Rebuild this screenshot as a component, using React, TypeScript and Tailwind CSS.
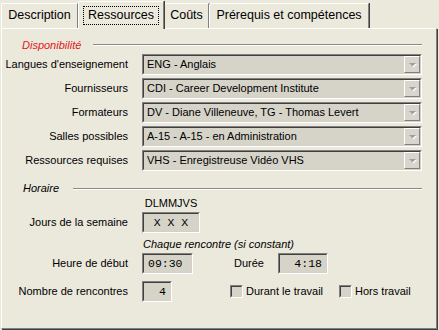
import React from "react";

const Sunken = ({ className, inner, children }: { className: string; inner: string; children?: React.ReactNode }) => (
  <div className={"border border-t-[#808080] border-l-[#808080] border-b-white border-r-white " + className}>
    <div className={"h-full w-full border border-t-[#404040] border-l-[#404040] border-b-[#d4d0c8] border-r-[#d4d0c8] bg-[#d6d3c9] flex items-center " + inner}>
      {children}
    </div>
  </div>
);

const Combo = ({ text }: { text: string }) => (
  <Sunken className="h-[21px] w-[280px]" inner="justify-between">
    <span className="pl-[3px] whitespace-nowrap">{text}</span>
    <div className="h-[17px] w-[16px] border border-t-white border-l-white border-b-[#808080] border-r-[#808080] bg-[#d8d5cc] flex items-center justify-center">
      <svg width="9" height="6" viewBox="0 0 9 6">
        <polygon points="2,2 9,2 5.5,5.5" fill="#ffffff" />
        <polygon points="1,1 8,1 4.5,4.5" fill="#a0a0a0" />
      </svg>
    </div>
  </Sunken>
);

const Header = ({ text, red }: { text: string; red?: boolean }) => (
  <div className="flex items-center h-[13px] leading-[13px] pr-[14px]">
    <span className={"italic whitespace-nowrap " + (red ? "text-[#e01818] pl-[20px]" : "text-black pl-[21px]")}>{text}</span>
    <div className={"flex-1 border-t border-t-[#8a8a8a] border-b border-b-white " + (red ? "ml-[12px] -mt-[2px]" : "ml-[14px] mt-[1px]")} />
  </div>
);

const Row = ({ label, children, className }: { label: string; children: React.ReactNode; className?: string }) => (
  <div className={"flex items-center " + (className ?? "")}>
    <div className="w-[126px] text-right whitespace-nowrap pr-[0px]">{label}</div>
    <div className="ml-[14px] flex items-center">{children}</div>
  </div>
);

const Check = ({ label }: { label: string }) => (
  <div className="flex items-center">
    <div className="h-[13px] w-[13px] border border-t-[#808080] border-l-[#808080] border-b-white border-r-white">
      <div className="h-full w-full border border-t-[#404040] border-l-[#404040] border-b-[#d4d0c8] border-r-[#d4d0c8] bg-[#d6d3c9]" />
    </div>
    <span className="ml-[3px] whitespace-nowrap">{label}</span>
  </div>
);

const Tab = ({ text, w }: { text: string; w: string }) => (
  <div className={"h-[25px] border-l border-t border-white border-r border-r-[#808080] shadow-[1px_0_0_#404040] rounded-tl-[2px] text-center pt-[4px] whitespace-nowrap " + w}>
    {text}
  </div>
);

export default function App() {
  const mono = "font-['Liberation_Mono',monospace] text-[11.5px]";
  return (
    <div className="w-[439px] h-[330px] bg-[#ebe8dc] font-['Liberation_Sans',Arial,sans-serif] text-[11px] text-black overflow-hidden">
      <div className="flex items-end h-[28px] pl-[1px] text-[12.5px] leading-[15px]">
        <Tab text="Description" w="w-[77px]" />
        <div className="relative z-10 -mb-[1px] h-[28px] w-[86px] bg-[#ebe8dc] border-l border-t border-white border-r border-r-[#808080] shadow-[1px_0_0_#404040] rounded-tl-[2px] flex justify-center pt-[4px]">
          <span className="h-[19px] px-[4px] pt-[1px] border border-dotted border-black whitespace-nowrap">Ressources</span>
        </div>
        <Tab text="Coûts" w="w-[45px]" />
        <Tab text="Prérequis et compétences" w="w-[160px]" />
      </div>
      <div className="ml-[1px] w-[436px] h-[301px] border-l border-t border-white border-r border-b border-r-[#808080] border-b-[#808080] shadow-[1px_1px_0_#404040] flex flex-col pt-[10px]">
        <Header text="Disponibilité" red />
        <div className="flex flex-col gap-[3px] mt-[2px]">
          <Row label="Langues d'enseignement"><Combo text="ENG - Anglais" /></Row>
          <Row label="Fournisseurs"><Combo text="CDI - Career Development Institute" /></Row>
          <Row label="Formateurs"><Combo text="DV - Diane Villeneuve, TG - Thomas Levert" /></Row>
          <Row label="Salles possibles"><Combo text="A-15 - A-15 - en Administration" /></Row>
          <Row label="Ressources requises"><Combo text="VHS - Enregistreuse Vidéo VHS" /></Row>
        </div>
        <div className="mt-[11px]"><Header text="Horaire" /></div>
        <div className="mt-[2px] h-[13px] leading-[13px] pl-[140px] w-[198px] text-center">DLMMJVS</div>
        <Row label="Jours de la semaine" className="mt-[2px]">
          <Sunken className="h-[21px] w-[58px]" inner={"justify-center " + mono}>
            <span className="font-['Liberation_Mono',monospace] whitespace-pre">X X X</span>
          </Sunken>
        </Row>
        <div className="mt-[5px] h-[13px] leading-[13px] pl-[141px] italic whitespace-nowrap">Chaque rencontre (si constant)</div>
        <Row label="Heure de début" className="mt-[2px]">
          <Sunken className="h-[21px] w-[51px]" inner={"pl-[4px] " + mono}>09:30</Sunken>
          <span className="ml-[41px]">Durée</span>
          <Sunken className="ml-[14px] h-[21px] w-[50px]" inner={"justify-end pr-[4px] " + mono}>4:18</Sunken>
        </Row>
        <Row label="Nombre de rencontres" className="mt-[7px]">
          <Sunken className="h-[21px] w-[30px]" inner={"justify-end pr-[4px] " + mono}>4</Sunken>
          <div className="ml-[58px]"><Check label="Durant le travail" /></div>
          <div className="ml-[16px]"><Check label="Hors travail" /></div>
        </Row>
      </div>
    </div>
  );
}
